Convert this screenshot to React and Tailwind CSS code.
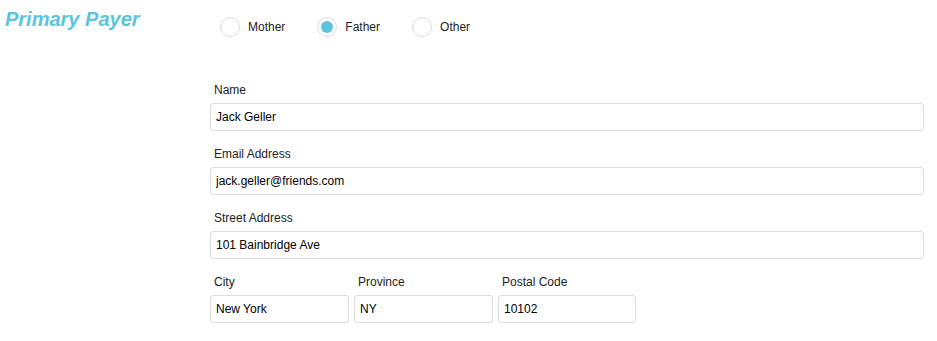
import React, { useState } from "react";

const font = { fontFamily: '"Liberation Sans", Arial, sans-serif' };

const Radio = ({ label, checked, onSelect }) => (
  <label className="flex items-center mr-[32px] cursor-pointer" onClick={onSelect}>
    <span className="w-[20px] h-[20px] rounded-full border border-[#dcdcdc] bg-white flex items-center justify-center">
      {checked && <span className="w-[12px] h-[12px] rounded-full bg-[#5bc4dc]"></span>}
    </span>
    <span className="ml-[8px] text-[12px] text-[#222]">{label}</span>
  </label>
);

const Field = ({ label, value, className = "" }) => (
  <div className={className}>
    <div className="h-[18px] leading-[18px] text-[12px] text-[#222] pl-[4px] mb-[4px]">{label}</div>
    <input
      defaultValue={value}
      className="w-full h-[28px] border border-[#dcdcdc] rounded-[3px] px-[5px] text-[12px] text-black outline-none bg-white"
      style={font}
    />
  </div>
);

export default function App() {
  const [payer, setPayer] = useState("Father");

  return (
    <div className="w-[937px] h-[341px] bg-white flex" style={font}>
      <div className="w-[210px] pl-[5px] pt-[8px]">
        <h2 className="text-[20px] leading-[22px] font-bold italic text-[#5bc4dc]">Primary Payer</h2>
      </div>
      <div className="flex-1 pr-[13px]">
        <div className="flex pl-[10px] pt-[17px]">
          {["Mother", "Father", "Other"].map((p) => (
            <Radio key={p} label={p} checked={payer === p} onSelect={() => setPayer(p)} />
          ))}
        </div>
        <div className="mt-[44px] flex flex-col gap-[14px]">
          <Field label="Name" value="Jack Geller" />
          <Field label="Email Address" value="jack.geller@friends.com" />
          <Field label="Street Address" value="101 Bainbridge Ave" />
          <div className="flex gap-[5px]">
            <Field className="w-[139px]" label="City" value="New York" />
            <Field className="w-[139px]" label="Province" value="NY" />
            <Field className="w-[138px]" label="Postal Code" value="10102" />
          </div>
        </div>
      </div>
    </div>
  );
}
